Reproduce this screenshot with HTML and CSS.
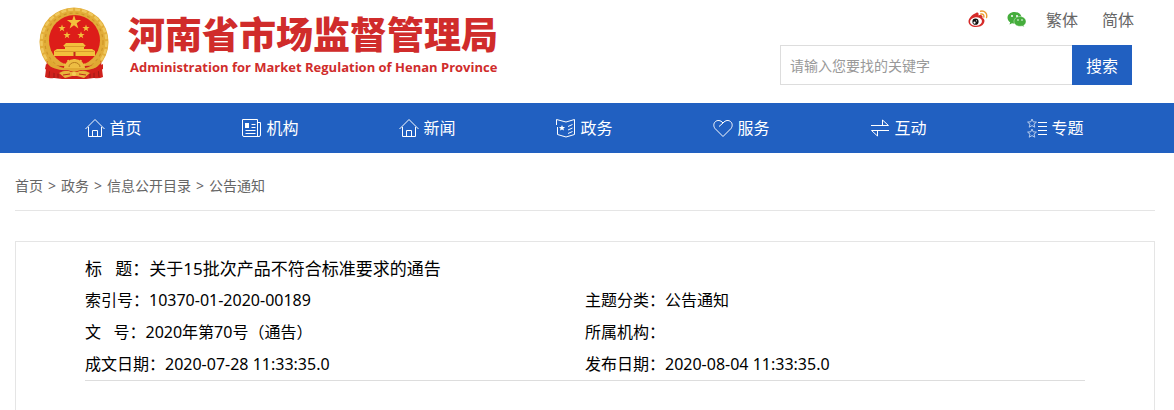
FILE: index.html
```html
<!DOCTYPE html>
<html lang="zh-CN">
<head>
  <meta charset="UTF-8">
  <meta name="viewport" content="width=device-width, initial-scale=1">
  <title>河南省市场监督管理局</title>
  <link rel="stylesheet" href="styles.css">
</head>
<body>
  <header class="header">
    <a class="logo" href="#">
      <svg class="emblem" viewBox="0 0 72 74" aria-hidden="true">
        <circle cx="36" cy="35" r="34.500" fill="#e2ad38"/>
        <circle cx="36" cy="35" r="32.500" fill="none" stroke="#efc75c" stroke-width="2.500" stroke-dasharray="5 2"/>
        <circle cx="36" cy="35" r="29" fill="none" stroke="#cf9628" stroke-width="1.200" stroke-dasharray="3 3"/>
        <circle cx="36.500" cy="33.500" r="25.500" fill="#dd1d19"/>
        <path d="M9 54q6 5 16 5h22q10 0 16-5l2 16q-4 2-9 1l-8 1H24l-8-1q-5 1-9-1z" fill="#cf211c"/>
        <path d="M12 60l-1 10M16 61v10M20 62v9M52 62v9M56 61v10M60 60l1 10" stroke="#9c1a15"/>
        <g fill="#f3c03c">
          <path d="M36 8l1.700 5.100h5.400l-4.400 3.200 1.700 5.100-4.400-3.100-4.400 3.100 1.700-5.100-4.400-3.200h5.400z"/>
          <path d="M24 17.500l.9 2.600h2.700l-2.200 1.600.9 2.600-2.300-1.600-2.300 1.600.9-2.600-2.200-1.600h2.700z"/>
          <path d="M48 17.500l.9 2.600h2.700l-2.200 1.600.9 2.600-2.300-1.600-2.300 1.600.9-2.600-2.200-1.600h2.700z"/>
          <path d="M29 24.500l.9 2.600h2.700l-2.200 1.600.9 2.600-2.300-1.600-2.300 1.600.9-2.600-2.200-1.600h2.700z"/>
          <path d="M43 24.500l.9 2.600h2.700l-2.200 1.600.9 2.600-2.300-1.600-2.300 1.600.9-2.600-2.200-1.600h2.700z"/>
          <path d="M28 36h17l3 3h-2v3h8l3 2v5H16v-5l3-2h8v-3h-2z"/>
        </g>
        <path d="M26 39.500h21M17 44.500h39" stroke="#d99a29"/>
        <path d="M36.500 45v4" stroke="#c2271b" stroke-width="2"/>
        <path d="M11 51q6 8 15 10 4-6 10.500-7 6 1 10.500 7 9-2 14-10l2 5q-7 8-17 9H26Q15 64 9 56z" fill="#e0a932"/>
        <path d="M26 61a10.500 9 0 0 1 21 0z" fill="#edbd43"/>
        <path d="M28 59l-2-2M31 56l-1-3M36.500 55v-3M42 56l1-3M45 59l2-2" stroke="#edbd43" stroke-width="2"/>
        <path d="M31 60a5.500 4.500 0 0 1 11 0" fill="none" stroke="#b97c1d"/>
        <path d="M8 57q10 7 21 6l7 2 7-2q12 1 22-6v5q-10 6-20 5H28q-12 1-21-5z" fill="#d3201b"/>
        <path d="M21 66q7-4 12-1h6q6-3 13 1l-6 5-7-2h-5l-7 2z" fill="#e8b43b"/>
        <path d="M25 68l7-1M41 67l7 1" stroke="#c0281a"/>
        <circle cx="36" cy="67" r="2" fill="#f5cc58"/>
      </svg>
      <span class="logo-text">
        <span class="logo-name">河南省市场监督管理局</span>
        <span class="logo-en">Administration for Market Regulation of Henan Province</span>
      </span>
    </a>
    <div class="tools">
      <div class="links">
        <a href="#" aria-label="微博">
          <svg class="social" viewBox="0 0 20 18">
            <path d="M8 3C10 2 11 3 10.500 5.500 13 4.500 15 5 14.500 8 16.500 9 17 10.500 16 13 14.500 16 11 17 8 17 4 17 .5 15 .5 11.500.5 8.500 4 4.500 8 3Z" fill="#d52b2a"/>
            <ellipse cx="8" cy="11.500" rx="6" ry="4.300" fill="#fff" transform="rotate(-8 8 11.500)"/>
            <circle cx="7.500" cy="11.700" r="3.100" fill="#111"/>
            <circle cx="6.500" cy="12.700" r="1.100" fill="#fff"/>
            <circle cx="8.500" cy="10.800" r=".6" fill="#fff"/>
            <path d="M12.500 1.200c4-.9 7.200 2.300 6 6.300M12.800 4c2-.4 3.500 1 3 3" fill="none" stroke="#eb9c33" stroke-width="1.400" stroke-linecap="round"/>
          </svg>
        </a>
        <a href="#" aria-label="微信">
          <svg class="social" viewBox="0 0 20 18">
            <path d="M7.500 2C3.400 2 .5 4.600.5 7.800c0 1.900 1 3.500 2.700 4.500l-.7 2.200 2.500-1.300c1 .3 2 .4 3 .3C12 13 14.500 11 14.500 7.800 14.500 4.600 11.600 2 7.500 2z" fill="#45ad3c"/>
            <path d="M13 6.500c-3.400 0-6 2.200-6 4.900s2.600 4.900 6 4.900c.8 0 1.500-.1 2.200-.3l2 1.100-.5-1.800c1.400-.9 2.300-2.300 2.300-3.900 0-2.700-2.600-4.900-6-4.900z" fill="#45ad3c" stroke="#fff" stroke-width=".4"/>
            <g fill="#fff"><circle cx="5" cy="6" r="1"/><circle cx="10" cy="6" r="1"/><circle cx="11" cy="10" r=".8"/><circle cx="15" cy="10" r=".8"/></g>
          </svg>
        </a>
        <a class="lang" href="#">繁体</a>
        <a class="lang" href="#">简体</a>
      </div>
      <form class="search">
        <input type="text" aria-label="关键字" placeholder="请输入您要找的关键字">
        <button type="submit">搜索</button>
      </form>
    </div>
  </header>

  <nav class="nav">
    <a href="#">
      <svg viewBox="0 0 20 20"><path d="M.5 11L10 1.500l9.500 9.500M3.500 9v9.500h13V9M7.500 18.500v-6h5v6"/></svg>首页
    </a>
    <a href="#">
      <svg viewBox="0 0 20 20"><path d="M.5 1.500h15v17H2a1.500 1.500 0 0 1-1.500-1.500zM15.500 4.500h3V17a1.500 1.500 0 0 1-1.500 1.500h-2M9.500 6.500h4M9.500 9.500h4M3.500 12.500h10M3.500 15.500h10"/><path class="solid" d="M3 5h4v5H3z"/></svg>机构
    </a>
    <a href="#">
      <svg viewBox="0 0 20 20"><path d="M.5 11L10 1.500l9.500 9.500M3.500 9v9.500h13V9M7.500 18.500v-6h5v6"/></svg>新闻
    </a>
    <a href="#">
      <svg viewBox="0 0 20 20"><path d="M.5 7V1.500L10 4l8.500-2.500v15L10 19l-8.500-2.500V9M12 8.500l4.500-2M12 12l4.500-2M12 15.500l4.500-2"/><path class="solid" d="M6 7l.9 2h2.200l-1.700 1.400.6 2.200-2-1.200-2 1.200.6-2.200L2.900 9h2.200z"/></svg>政务
    </a>
    <a href="#">
      <svg viewBox="0 0 20 20"><path d="M10 18.500L2 10.500C-2 5 5-1 10 5c5-6 12 0 8 5.500zM10 5L6 8.500"/></svg>服务
    </a>
    <a href="#">
      <svg viewBox="0 0 20 20"><path d="M1 7.500h17.500L12.500 2v5.500M19 12.500H1.500L7.500 18v-5.500"/></svg>互动
    </a>
    <a href="#">
      <svg viewBox="0 0 20 20"><path d="M11 4.500h9M11 8.500h9M11 12.500h9M11 16.500h9"/><path class="thin" d="M5 1l1.200 2.800 3.200.3L7 6.200l.8 3L5 7.600 2.200 9.200l.8-3L.6 4.100l3.200-.3zM5 11l1.200 2.800 3.200.3L7 16.200l.8 3L5 17.600l-2.800 1.600.8-3-2.400-2.100 3.200-.3z"/></svg>专题
    </a>
  </nav>

  <main class="main">
    <div class="crumbs">
      <a href="#">首页</a>
      <span>&gt;</span>
      <a href="#">政务</a>
      <span>&gt;</span>
      <a href="#">信息公开目录</a>
      <span>&gt;</span>
      <a href="#">公告通知</a>
    </div>
    <article class="article">
      <div class="info">
        <p class="info-title">标&nbsp;&nbsp; 题：关于15批次产品不符合标准要求的通告</p>
        <p>索引号：10370-01-2020-00189</p>
        <p>主题分类：公告通知</p>
        <p>文&nbsp;&nbsp; 号：2020年第70号（通告）</p>
        <p>所属机构：</p>
        <p>成文日期：2020-07-28 11:33:35.0</p>
        <p>发布日期：2020-08-04 11:33:35.0</p>
      </div>
    </article>
  </main>
</body>
</html>
```
FILE: styles.css
```css
* { box-sizing: border-box; }
body {
  margin: 0;
  font-family: "Noto Sans", "Noto Sans CJK SC", sans-serif;
  font-size: 16px;
  color: #000;
  background: #fff;
}
a {
  color: inherit;
  text-decoration: none;
}
p { margin: 0; }
.header {
  display: flex;
  justify-content: space-between;
  align-items: flex-start;
  padding: 7px 40px 18px 38px;
}
.logo {
  display: flex;
  gap: 18px;
  color: #d02c2b;
}
.emblem {
  width: 72px;
  height: 74px;
}
.logo-text {
  display: flex;
  flex-direction: column;
  font-family: "Noto Sans CJK SC", sans-serif;
  white-space: nowrap;
}
.logo-name {
  font-size: 37px;
  font-weight: 900;
  line-height: 52px;
}
.logo-en {
  padding-left: 2px;
  font-family: "Open Sans", sans-serif;
  font-size: 13px;
  font-weight: 700;
  line-height: 16px;
}
.tools {
  display: flex;
  flex-direction: column;
  gap: 14px;
  width: 354px;
}
.links {
  display: flex;
  justify-content: flex-end;
  align-items: center;
  gap: 19px;
  height: 24px;
  color: #666;
}
.social {
  display: block;
  width: 20px;
  height: 18px;
}
.lang + .lang {
  margin-left: 5px;
}
.search {
  display: flex;
  height: 40px;
  margin-right: 2px;
}
.search input {
  flex: 1;
  min-width: 0;
  padding: 0 9px;
  border: 1px solid #ddd;
  border-right: 0;
  font-family: inherit;
  font-size: 14px;
}
.search input::placeholder {
  color: #999;
}
.search button {
  width: 60px;
  padding: 0;
  border: 0;
  background: #2160c1;
  color: #fff;
  font-family: inherit;
  font-size: 16px;
  cursor: pointer;
}
.nav {
  display: flex;
  height: 50px;
  padding: 0 40px 2px 35px;
  background: #2160c1;
  color: #fff;
}
.nav a {
  flex: 1;
  display: flex;
  justify-content: center;
  align-items: center;
  gap: 4px;
}
.nav svg {
  width: 20px;
  height: 20px;
  margin-top: 2px;
  fill: none;
  stroke: #fff;
}
.nav .solid {
  fill: #fff;
  stroke: none;
}
.nav .thin {
  stroke: #b9cdec;
}
.main {
  padding: 0 19px 0 15px;
}
.crumbs {
  display: flex;
  gap: 5px;
  padding: 21px 0 12px;
  border-bottom: 1px solid #e5e5e5;
  font-size: 14px;
  line-height: 24px;
  color: #666;
}
.article {
  margin-top: 30px;
  padding: 12px 69px 29px;
  border: 1px solid #e5e5e5;
  border-bottom: 0;
}
.info {
  display: grid;
  grid-template-columns: 1fr 1fr;
  border-bottom: 1px solid #ddd;
  line-height: 32px;
}
.info-title {
  grid-column: 1 / -1;
  font-size: 17px;
  line-height: 30px;
}
```
